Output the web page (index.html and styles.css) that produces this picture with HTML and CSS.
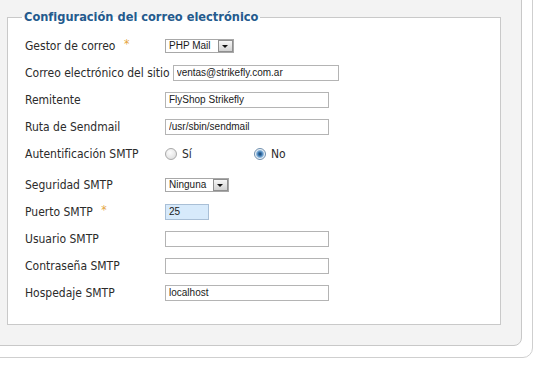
FILE: index.html
```html
<!DOCTYPE html>
<html lang="es">

<head>
  <meta charset="UTF-8">
  <meta name="viewport" content="width=device-width, initial-scale=1.0">
  <title>Configuración del correo</title>
  <link rel="stylesheet" href="styles.css">
</head>

<body>
  <div class="page">
    <div class="panel">
      <fieldset class="mail-config">
        <legend>Configuración del correo electrónico</legend>

        <div class="row">
          <label>Gestor de correo <span class="star">*</span></label>
          <span class="select select-mailer">
            <span class="select-value">PHP Mail</span>
            <span class="select-btn"></span>
          </span>
        </div>
        <div class="row">
          <label>Correo electrónico del sitio</label>
          <input type="text" class="field field-email" value="ventas@strikefly.com.ar">
        </div>
        <div class="row">
          <label>Remitente</label>
          <input type="text" class="field" value="FlyShop Strikefly">
        </div>
        <div class="row">
          <label>Ruta de Sendmail</label>
          <input type="text" class="field" value="/usr/sbin/sendmail">
        </div>
        <div class="row row-radio">
          <label>Autentificación SMTP</label>
          <span class="option"><input type="radio" name="smtpauth" class="radio"> Sí</span>
          <span class="option"><input type="radio" name="smtpauth" class="radio" checked> No</span>
        </div>
        <div class="row">
          <label>Seguridad SMTP</label>
          <span class="select select-secure">
            <span class="select-value">Ninguna</span>
            <span class="select-btn"></span>
          </span>
        </div>
        <div class="row">
          <label>Puerto SMTP <span class="star">*</span></label>
          <input type="text" class="field field-port" value="25">
        </div>
        <div class="row">
          <label>Usuario SMTP</label>
          <input type="text" class="field" value="">
        </div>
        <div class="row">
          <label>Contraseña SMTP</label>
          <input type="password" class="field" value="">
        </div>
        <div class="row">
          <label>Hospedaje SMTP</label>
          <input type="text" class="field" value="localhost">
        </div>
      </fieldset>
    </div>
  </div>
</body>

</html>
```

FILE: styles.css
```css
body {
  font-family: 'DejaVu Sans', sans-serif;
  font-stretch: condensed;
  background-color: #fff;
  margin: 0;
  padding: 0;
  overflow: hidden;
}

.page {
  width: 545px;
  box-sizing: border-box;
  margin: -12px 0 0 -12px;
  padding: 0 10px 11px 0;
  border: 1px solid #cfcfcf;
  border-radius: 10px;
  background-color: #fff;
}

.panel {
  background-color: #f3f3f3;
  border: 1px solid #c8c8c8;
  border-radius: 8px;
  padding: 19px 20px 20px 17px;
}

.mail-config {
  margin: 0;
  padding: 7px 17px 18px;
  border: 1px solid #c9c9c9;
  background-color: #fff;
}

.mail-config legend {
  font-size: 12.7px;
  font-weight: bold;
  line-height: 16px;
  color: #245a8d;
  padding: 0 2px;
  margin-left: -3px;
}

.row {
  display: flex;
  align-items: center;
  height: 27px;
}

.row-radio {
  margin-bottom: 4px;
}

label {
  flex-shrink: 0;
  box-sizing: border-box;
  min-width: 140px;
  padding-right: 3px;
  font-size: 12px;
  color: #2b2b2b;
}

.star {
  color: #e4a43e;
  margin-left: 5px;
  position: relative;
  top: -2px;
}

.field {
  box-sizing: border-box;
  width: 164px;
  height: 16px;
  margin: 0;
  padding: 0 3px;
  border: 1px solid #b4b4b4;
  font-family: 'Liberation Sans', Arial, sans-serif;
  font-stretch: normal;
  font-size: 10px;
  color: #1a1a1a;
  outline: none;
}

.field-email {
  width: 166px;
}

.field-port {
  width: 44px;
  background-color: #d7eafb;
  border-color: #a9bfd6;
}

.select {
  display: inline-flex;
  align-items: center;
  box-sizing: border-box;
  height: 14px;
  border: 1px solid #a8a8a8;
  background-color: #fff;
  font-family: 'Liberation Sans', Arial, sans-serif;
  font-stretch: normal;
  font-size: 10px;
  color: #1a1a1a;
}

.select-mailer {
  width: 69px;
}

.select-secure {
  width: 64px;
}

.select-value {
  flex: 1;
  padding-left: 3px;
}

.select-btn {
  position: relative;
  box-sizing: border-box;
  width: 15px;
  height: 12px;
  border: 1px solid #8f8f8f;
  background: linear-gradient(#f6f6f6, #d2d2d2);
}

.select-btn::after {
  content: '';
  position: absolute;
  left: 3px;
  top: 4px;
  border-left: 3px solid transparent;
  border-right: 3px solid transparent;
  border-top: 3px solid #111;
}

.option {
  display: inline-flex;
  align-items: center;
  width: 89px;
  font-size: 12px;
  color: #2b2b2b;
}

.radio {
  appearance: none;
  -webkit-appearance: none;
  box-sizing: border-box;
  width: 12px;
  height: 12px;
  margin: 0 5px 0 0;
  border: 1px solid #a9a9a9;
  border-radius: 50%;
  background: radial-gradient(circle at 40% 35%, #fdfdfd, #d8d8d8);
}

.radio:checked {
  border-color: #6f8fae;
  background: radial-gradient(circle, #1d3f63 0, #3c7ab4 2px, #8fb8dc 3.5px, #eef3f8 4.5px);
}
```
